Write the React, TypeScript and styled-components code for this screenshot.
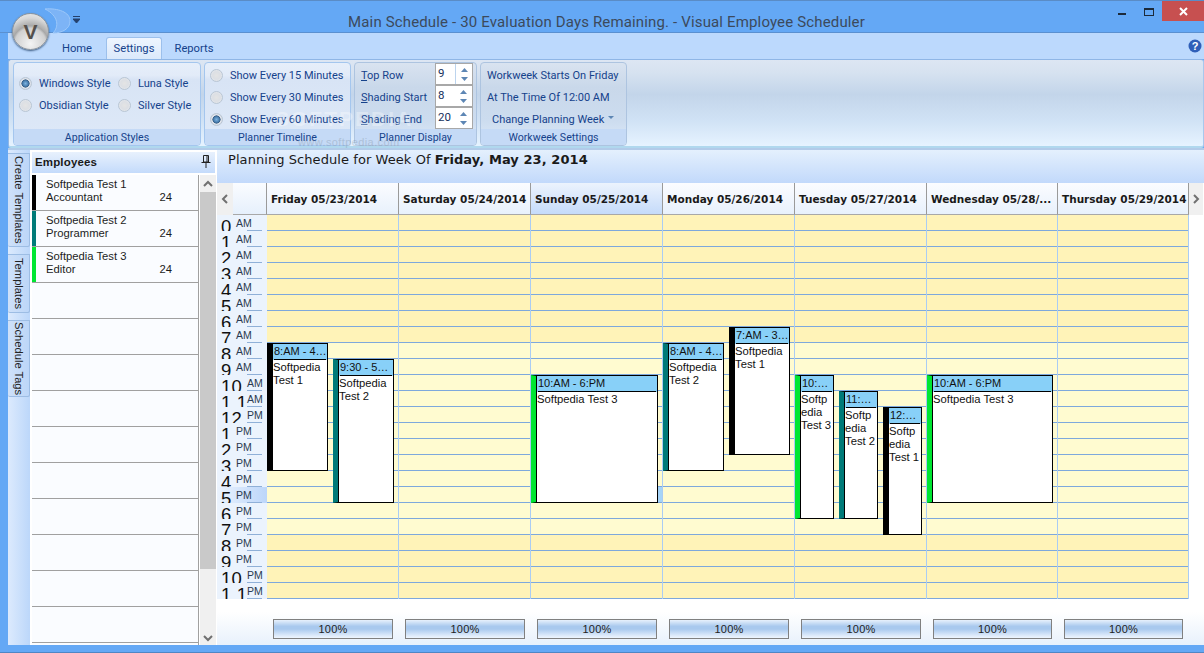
import React from "react";
import styled, { createGlobalStyle } from "styled-components";

const Global = createGlobalStyle`
  html, body { margin: 0; padding: 0; background: #64a8f5; }
  * { box-sizing: border-box; }
`;

const UI = `Roboto, "Liberation Sans", sans-serif`;
const SMALL = `"Liberation Sans", Arial, sans-serif`;
const VERD = `"DejaVu Sans", Verdana, sans-serif`;

const Window = styled.div`
  position: relative; width: 1204px; height: 653px; overflow: hidden;
  display: flex; flex-direction: column;
  background: #64a8f5; border-top: 1px solid #5a8cc6; border-bottom: 1px solid #4f86c4;
  font-family: ${UI}; color: #15428b;
`;
const TitleBar = styled.div`
  height: 32px; flex: none; display: flex; align-items: flex-start; justify-content: center;
  padding: 12px 0 0 9px; position: relative; border-bottom: 1px solid #5a90d0;
`;
const Title = styled.div`
  font-size: 15px; line-height: 18px; color: #3c4a5c; letter-spacing: 0.15px; white-space: nowrap;
`;
const Controls = styled.div`
  position: absolute; top: 0; right: 0; display: flex; align-items: flex-start;
`;
const MinBtn = styled.div`
  width: 8px; height: 2px; background: #1c2a3a; margin: 12px 18px 0 0;
`;
const MaxBtn = styled.div`
  width: 10px; height: 8px; border: 1px solid #1c2a3a; border-top-width: 2px; margin: 7px 8px 0 0;
`;
const CloseBtn = styled.div`
  width: 42px; height: 20px; background: #c75050; display: flex; align-items: center; justify-content: center;
`;
const Orb = styled.div`
  position: absolute; left: 12px; top: 12px; width: 37px; height: 37px; border-radius: 50%; z-index: 5;
  background: radial-gradient(circle at 50% 85%, #f4f4f4 0%, #d0d0d0 45%, #a8a8a8 52%, #d8d8d8 75%, #f2f2f2 100%);
  border: 1px solid #8c949c; box-shadow: 0 1px 2px #3a5a80;
  display: flex; align-items: center; justify-content: center;
  font: bold 21px ${SMALL}; color: #55504c;
`;
const QuickShape = styled.svg`
  position: absolute; left: 44px; top: 7px; z-index: 4;
`;
const QuickArrow = styled.svg`
  position: absolute; left: 73px; top: 15px; z-index: 4;
`;

const TabRow = styled.div`
  height: 26px; flex: none; margin-left: 8px; background: #bcd9fd; display: flex; align-items: flex-end;
  padding-left: 40px; position: relative; gap: 0;
`;
const Tab = styled.div<{ $active?: boolean; $w: number }>`
  height: 22px; width: ${p => p.$w}px; font-size: 11.2px; color: #15428b;
  display: flex; align-items: center; justify-content: center;
  ${p => p.$active ? `
    background: linear-gradient(#eef5fe, #dbe9fb);
    border: 1px solid #9cc0ec; border-bottom: none; border-radius: 3px 3px 0 0;
  ` : ""}
`;
const Help = styled.svg`
  position: absolute; right: 2px; top: 6px;
`;

const GroupPanel = styled.div`
  height: 89px; flex: none; margin-left: 8px; padding: 2px 0 0 4px; display: flex; gap: 3px;
  background: linear-gradient(#dde6f3 0%, #d6e2f0 15%, #c3d5ea 40%, #d0e2f5 70%, #e6f3ff 100%);
  border: 1px solid #8fb6e6; border-right-color: #a8c8ee; border-radius: 3px; border-bottom: 2px solid #b0d8ee;
`;
const Group = styled.div<{ $w: number; $light?: boolean }>`
  width: ${p => p.$w}px; height: 84px; flex: none; display: flex; flex-direction: column; overflow: hidden;
  border: 1px solid ${p => p.$light ? "#a4c6ee" : "#adc4e0"}; border-radius: 4px;
  background: ${p => p.$light
    ? "linear-gradient(#e6eefa 0%, #e2ebf8 15%, #d8e4f5 20%, #dee9f8 100%)"
    : "linear-gradient(#d9e3f0 0%, #c9d8ea 30%, #ccdcef 70%, #dde9f8 100%)"};
`;
const GroupBody = styled.div`
  flex: 1; min-height: 0; position: relative;
`;
const GroupLabel = styled.div`
  height: 16px; flex: none; background: #c5daf6; text-align: center; font-size: 10.6px; line-height: 17px; color: #15428b;
`;
const RadioGrid = styled.div`
  display: grid; grid-template-columns: 99px auto; grid-auto-rows: 22px; padding: 9px 0 0 5px;
`;
const RadioColumn = styled.div`
  display: flex; flex-direction: column; padding: 1px 0 0 5px;
`;
const RadioRow = styled.div`
  height: 22px; display: flex; align-items: center; gap: 7px; font-size: 11px; white-space: nowrap; color: #15428b;
`;
const Radio = styled.span<{ $on?: boolean }>`
  width: 13px; height: 13px; border-radius: 50%; flex: none; border: 1px solid #b9c6d4;
  background: ${p => p.$on
    ? "radial-gradient(circle closest-side, #7fb4e0 0%, #4a7fb0 50%, #34597f 70%, #e4e8ee 78%, #d8dde6 100%)"
    : "radial-gradient(circle, #e4e4e4 0%, #dcdfe4 50%, #eef0f4 100%)"};
`;
const DisplayGrid = styled.div`
  display: grid; grid-template-columns: 74px 38px; grid-auto-rows: 22px; padding: 0 0 0 6px; align-items: center;
`;
const FieldLabel = styled.div`
  font-size: 11px; color: #15428b; white-space: nowrap; padding-top: 2px;
  u { text-underline-offset: 1px; }
`;
const Spinner = styled.div`
  height: 22px; width: 38px; background: #fff; border: 1px solid #a8a8a8; position: relative; display: flex;
  font-size: 11.5px; color: #15305c; padding: 2px 0 0 2px;
`;
const SpinButtons = styled.div<{ $focus?: boolean }>`
  position: absolute; right: 0; top: 0; bottom: 0; width: 17px; display: flex; flex-direction: column;
  align-items: center; justify-content: center; gap: 5px;
  border-left: ${p => p.$focus ? "1px solid #bcd4ee" : "none"};
`;
const SpinArrow = styled.svg``;
const WorkColumn = styled.div`
  display: flex; flex-direction: column; padding: 1px 0 0 6px;
`;
const WorkLine = styled.div<{ $center?: boolean }>`
  height: 22px; display: flex; align-items: center; gap: 4px; font-size: 11px; white-space: nowrap; color: #15428b;
  padding-left: ${p => p.$center ? 5 : 0}px;
`;
const DropCaret = styled.svg`
  margin-top: -4px;
`;
const Watermark = styled.div`
  position: absolute; left: 275px; top: 106px; z-index: 6; color: #fff; opacity: 0.32;
  font: bold 21px ${SMALL}; letter-spacing: 2px; pointer-events: none;
`;
const WatermarkUrl = styled.div`
  position: absolute; left: 298px; top: 135px; z-index: 6; color: #8090a0; opacity: 0.35;
  font: 11px ${SMALL}; letter-spacing: 0.4px; pointer-events: none;
`;

const Body = styled.div`
  flex: 1; min-height: 0; margin: 2px 0 7px 8px; display: flex; background: #fff;
  box-shadow: 0 -2px 0 #b2cbe9;
`;
const SideStrip = styled.div`
  width: 23px; flex: none; display: flex; flex-direction: column; gap: 7px; padding-top: 3px;
  background: linear-gradient(90deg, #dceafd, #bcd7fa); border-right: 1px solid #fff;
`;
const SideTab = styled.div<{ $h: number }>`
  height: ${p => p.$h}px; width: 22px; writing-mode: vertical-rl; display: flex; align-items: center; justify-content: center;
  background: linear-gradient(90deg, #cfe1f9, #bcd6f8); border: 1px solid #9dbde4; border-left: none;
  font: 11.2px ${SMALL}; color: #222; white-space: nowrap; border-radius: 0 0 2px 2px;
`;
const EmployeePanel = styled.div`
  width: 185px; flex: none; display: flex; flex-direction: column; padding-left: 1px; background: #fff;
`;
const PanelHead = styled.div`
  height: 23px; flex: none; display: flex; align-items: center; justify-content: space-between; padding: 0 4px 2px 3px;
  background: linear-gradient(#e8f1fd, #c4dbfb); font: bold 11.5px ${SMALL}; letter-spacing: 0.15px; color: #1a1a1a;
  margin-right: 1px; border-top: 2px solid #fff;
`;
const PanelMain = styled.div`
  flex: 1; min-height: 0; display: flex; padding-top: 2px;
`;
const EmpList = styled.div`
  width: 167px; flex: none; background: #fafcff; border-right: 1px solid #a0a0a0; overflow: hidden;
`;
const EmpRow = styled.div`
  height: 36px; display: flex; border-bottom: 1px solid #a0a0a0;
`;
const EmpBar = styled.div<{ $c?: string }>`
  width: 4px; flex: none; background: ${p => p.$c ?? "transparent"};
`;
const EmpText = styled.div`
  flex: 1; padding: 3px 0 0 10px; font: 11.25px/13px ${SMALL}; color: #1c1c1c;
`;
const EmpLine = styled.div`
  display: flex; justify-content: space-between; padding-right: 26px; white-space: nowrap;
`;
const ScrollBar = styled.div`
  width: 16px; flex: none; margin-left: 1px; display: flex; flex-direction: column; align-items: stretch; background: #f0f0f0;
`;
const ScrollBtn = styled.div`
  height: 17px; flex: none; display: flex; align-items: center; justify-content: center;
`;
const ScrollThumb = styled.div`
  height: 377px; flex: none; background: #c9c9c9;
`;
const ScrollRest = styled.div`
  flex: 1; display: flex; align-items: flex-end; justify-content: center; padding-bottom: 2px;
`;

const Planner = styled.div`
  flex: 1; min-width: 0; margin-left: 1px; display: flex; flex-direction: column; background: #fff;
`;
const PlanHead = styled.div`
  height: 33px; flex: none; padding: 1px 0 0 11px; background: linear-gradient(#e4f0fd, #c2d9fb);
  font: 13px/17px ${VERD}; color: #1a1a1a; white-space: nowrap; letter-spacing: 0.07px;
  b { font-weight: 700; }
`;
const HeadRow = styled.div`
  height: 32px; flex: none; display: flex; background: #fff;
`;
const NavBtn = styled.div<{ $w: number }>`
  width: ${p => p.$w}px; flex: none; background: #f0f0f0; display: flex; align-items: center; justify-content: center;
`;
const HeadSpacer = styled.div`
  width: 34px; flex: none; background: linear-gradient(#fafcff, #e6f0fc); border-right: 1px solid #9a9a9a; border-bottom: 1px solid #a8a8a8;
`;
const DayHead = styled.div<{ $w: number; $hi?: boolean }>`
  width: ${p => p.$w}px; flex: none; padding: 0 0 0 4px; display: flex; align-items: center;
  border-right: 1px solid #9a9a9a; border-bottom: 1px solid #a8a8a8;
  font: bold 10.5px ${VERD}; color: #1a1a1a; white-space: nowrap; overflow: hidden;
  background: ${p => p.$hi ? "linear-gradient(#ecf3fd, #c5dbfa)" : "linear-gradient(#fbfcff, #e8f1fc)"};
`;
const GridRow = styled.div`
  height: 384px; flex: none; display: flex; background: #fff;
`;
const TimeCol = styled.div`
  width: 50px; flex: none; background: #ebf3fd; display: flex; flex-direction: column;
`;
const TimeCell = styled.div<{ $hi?: boolean }>`
  height: 16px; flex: none; position: relative; overflow: hidden; padding-left: 4px; display: flex; align-items: flex-start;
  background: ${p => p.$hi ? "linear-gradient(90deg, #ebf3fd, #bcd6fa)" : "transparent"};
`;
const Hour = styled.span`
  font: 18.5px/20px ${SMALL}; color: #101010; margin-top: 2px; letter-spacing: 0.2px; white-space: nowrap;
`;
const Meridiem = styled.span<{ $wide?: boolean }>`
  font: 10.5px/12px ${SMALL}; color: #2a3a50; position: absolute; left: ${p => p.$wide ? 30 : 19}px; top: 2px;
`;
const TickLine = styled.i`
  position: absolute; right: 5px; bottom: 0; width: 15px; height: 1px; background: #8fb0d8;
`;
const DayCol = styled.div<{ $w: number }>`
  width: ${p => p.$w}px; flex: none; position: relative; display: flex; flex-direction: column; border-right: 1px solid #aaccf4;
`;
const Cell = styled.div<{ $shade?: boolean }>`
  height: 16px; flex: none; border-bottom: 1px solid #7ea8dc;
  background: ${p => p.$shade ? "#fff3b8" : "#fffbd0"};
  position: relative;
`;
const SelMark = styled.i`
  position: absolute; right: 0; top: 0; bottom: 0; width: 5px; background: #a6d4f8;
`;
const EventBox = styled.div<{ $l: number; $t: number; $w: number; $h: number; $c: string }>`
  position: absolute; left: ${p => p.$l}px; top: ${p => p.$t}px; width: ${p => p.$w}px; height: ${p => p.$h}px;
  display: flex; flex-direction: column; background: #fff; border: 1px solid #000; border-left: 5px solid ${p => p.$c};
  font: 11.25px/13px ${SMALL}; color: #111; z-index: 2; box-shadow: inset 1px 0 0 #000;
`;
const EventHead = styled.div`
  height: 16px; flex: none; margin-left: 1px; padding: 1px 0 0 1px; background: #88d0f8; position: relative;
  font-size: 11px; white-space: nowrap; overflow: hidden; text-overflow: ellipsis;
  &::after { content: ""; position: absolute; left: 1px; right: 1px; bottom: 0; height: 1px; background: #000; }
`;
const EventText = styled.div`
  padding: 1px 0 0 0; margin-left: 1px; overflow-wrap: anywhere; word-break: break-word;
`;
const Foot = styled.div`
  flex: 1; min-height: 0; display: flex; padding: 20px 0 0 56px; gap: 12px;
  background: linear-gradient(#fff 0%, #fff 28%, #e8f1fc 100%);
`;
const ZoomBtn = styled.div<{ $w: number }>`
  width: ${p => p.$w}px; height: 20px; flex: none; border: 1px solid #808080;
  background: linear-gradient(#e8f1fc 0%, #a9c9ee 35%, #a9c9ee 50%, #dce9fa 85%, #eef5fe 100%);
  display: flex; align-items: center; justify-content: center; font: 11px ${SMALL}; color: #222; letter-spacing: 0.2px;
`;

const days = [
  { label: "Friday 05/23/2014", w: 132 },
  { label: "Saturday 05/24/2014", w: 132 },
  { label: "Sunday 05/25/2014", w: 132, hi: true },
  { label: "Monday 05/26/2014", w: 132 },
  { label: "Tuesday 05/27/2014", w: 132 },
  { label: "Wednesday 05/28/...", w: 131 },
  { label: "Thursday 05/29/2014", w: 131 },
];
const BLACK = "#000";
const TEAL = "#007a78";
const GREEN = "#00e632";
const events = [
  { d: 0, l: 0, t: 8, r: 8, w: 61, time: "8:AM - 4:PM", who: "Softpedia Test 1", c: BLACK },
  { d: 0, l: 66, t: 9, r: 9, w: 61, time: "9:30 - 5PM", who: "Softpedia Test 2", c: TEAL },
  { d: 2, l: 0, t: 10, r: 8, w: 127, time: "10:AM - 6:PM", who: "Softpedia Test 3", c: GREEN },
  { d: 3, l: 0, t: 8, r: 8, w: 61, time: "8:AM - 4:PM", who: "Softpedia Test 2", c: TEAL },
  { d: 3, l: 66, t: 7, r: 8, w: 61, time: "7:AM - 3:PM", who: "Softpedia Test 1", c: BLACK },
  { d: 4, l: 0, t: 10, r: 9, w: 39, time: "10:AM - 7:PM", who: "Softpedia Test 3", c: GREEN },
  { d: 4, l: 44, t: 11, r: 8, w: 39, time: "11:AM - 7:PM", who: "Softpedia Test 2", c: TEAL },
  { d: 4, l: 88, t: 12, r: 8, w: 39, time: "12:PM - 8:PM", who: "Softpedia Test 1", c: BLACK },
  { d: 5, l: 0, t: 10, r: 8, w: 126, time: "10:AM - 6:PM", who: "Softpedia Test 3", c: GREEN },
];
const hours = Array.from({ length: 24 }, (_, i) => ({
  n: i === 0 || i === 12 ? (i === 0 ? "0" : "12") : i < 12 ? `${i}` : `${i - 12}`,
  m: i < 12 ? "AM" : "PM",
  i,
}));
const employees = [
  { name: "Softpedia Test 1", role: "Accountant", c: BLACK },
  { name: "Softpedia Test 2", role: "Programmer", c: TEAL },
  { name: "Softpedia Test 3", role: "Editor", c: GREEN },
];
const SpinIcons = ({ focus }: { focus?: boolean }) => (
  <SpinButtons $focus={focus}>
    <SpinArrow width="7" height="4" viewBox="0 0 7 4"><path d="M0 4 L3.5 0 L7 4Z" fill="#5d86b4" /></SpinArrow>
    <SpinArrow width="7" height="4" viewBox="0 0 7 4"><path d="M0 0 L3.5 4 L7 0Z" fill="#5d86b4" /></SpinArrow>
  </SpinButtons>
);
const Chevron = ({ d }: { d: string }) => (
  <svg width="10" height="10" viewBox="0 0 10 10"><path d={d} fill="none" stroke="#707070" strokeWidth="2" /></svg>
);

export default function App() {
  return (
    <>
      <Global />
      <Window>
        <TitleBar>
          <Title>Main Schedule - 30 Evaluation Days Remaining. - Visual Employee Scheduler</Title>
          <Controls>
            <MinBtn />
            <MaxBtn />
            <CloseBtn>
              <svg width="9" height="9" viewBox="0 0 9 9"><path d="M1 1 L8 8 M8 1 L1 8" stroke="#fff" strokeWidth="2" /></svg>
            </CloseBtn>
          </Controls>
        </TitleBar>
        <Orb>V</Orb>
        <QuickShape width="27" height="26" viewBox="0 0 27 26">
          <path d="M1 1 C14 0 26 4 26 13 C26 21 18 25 9 25 C15 19 15 8 1 1Z" fill="#7db4f6" stroke="#9cc8fa" />
        </QuickShape>
        <QuickArrow width="7" height="7" viewBox="0 0 7 7">
          <path d="M0 0.5 H7 M0 3 H7 L3.5 7Z" stroke="#24406c" strokeWidth="1" fill="#24406c" />
        </QuickArrow>
        <TabRow>
          <Tab $w={58}>Home</Tab>
          <Tab $w={56} $active>Settings</Tab>
          <Tab $w={64}>Reports</Tab>
          <Help width="14" height="14" viewBox="0 0 14 14">
            <circle cx="7" cy="7" r="6.5" fill="#2f5fb8" />
            <text x="7" y="11" textAnchor="middle" fontFamily="Liberation Sans" fontWeight="bold" fontSize="11" fill="#fff">?</text>
          </Help>
        </TabRow>
        <GroupPanel>
          <Group $w={188} $light>
            <GroupBody>
              <RadioGrid>
                <RadioRow><Radio $on />Windows Style</RadioRow>
                <RadioRow><Radio />Luna Style</RadioRow>
                <RadioRow><Radio />Obsidian Style</RadioRow>
                <RadioRow><Radio />Silver Style</RadioRow>
              </RadioGrid>
            </GroupBody>
            <GroupLabel>Application Styles</GroupLabel>
          </Group>
          <Group $w={147} $light>
            <GroupBody>
              <RadioColumn>
                <RadioRow><Radio />Show Every 15 Minutes</RadioRow>
                <RadioRow><Radio />Show Every 30 Minutes</RadioRow>
                <RadioRow><Radio $on />Show Every 60 Minutes</RadioRow>
              </RadioColumn>
            </GroupBody>
            <GroupLabel>Planner Timeline</GroupLabel>
          </Group>
          <Group $w={123}>
            <GroupBody>
              <DisplayGrid>
                <FieldLabel><u>T</u>op Row</FieldLabel>
                <Spinner>9<SpinIcons focus /></Spinner>
                <FieldLabel><u>S</u>hading Start</FieldLabel>
                <Spinner>8<SpinIcons /></Spinner>
                <FieldLabel><u>S</u>hading End</FieldLabel>
                <Spinner>20<SpinIcons /></Spinner>
              </DisplayGrid>
            </GroupBody>
            <GroupLabel>Planner Display</GroupLabel>
          </Group>
          <Group $w={147}>
            <GroupBody>
              <WorkColumn>
                <WorkLine>Workweek Starts On Friday</WorkLine>
                <WorkLine>At The Time Of 12:00 AM</WorkLine>
                <WorkLine $center>
                  Change Planning Week
                  <DropCaret width="6" height="3" viewBox="0 0 6 3"><path d="M0 0H6L3 3Z" fill="#5d86b4" /></DropCaret>
                </WorkLine>
              </WorkColumn>
            </GroupBody>
            <GroupLabel>Workweek Settings</GroupLabel>
          </Group>
        </GroupPanel>
        <Watermark>SOFTPEDIA</Watermark>
        <WatermarkUrl>www.softpedia.com</WatermarkUrl>
        <Body>
          <SideStrip>
            <SideTab $h={94}>Create Templates</SideTab>
            <SideTab $h={59}>Templates</SideTab>
            <SideTab $h={77}>Schedule Tags</SideTab>
          </SideStrip>
          <EmployeePanel>
            <PanelHead>
              Employees
              <svg width="10" height="13" viewBox="0 0 10 13">
                <path d="M2.5 0.5H7.5V7H2.5Z M0.5 7.5H9.5 M5 8V13 M6 1V7" fill="none" stroke="#222" />
              </svg>
            </PanelHead>
            <PanelMain>
              <EmpList>
                {employees.map(e => (
                  <EmpRow key={e.name}>
                    <EmpBar $c={e.c} />
                    <EmpText>
                      <EmpLine>{e.name}</EmpLine>
                      <EmpLine>{e.role}<span>24</span></EmpLine>
                    </EmpText>
                  </EmpRow>
                ))}
                {Array.from({ length: 10 }, (_, i) => <EmpRow key={i} />)}
              </EmpList>
              <ScrollBar>
                <ScrollBtn><Chevron d="M1 7 L5 3 L9 7" /></ScrollBtn>
                <ScrollThumb />
                <ScrollRest><Chevron d="M1 3 L5 7 L9 3" /></ScrollRest>
              </ScrollBar>
            </PanelMain>
          </EmployeePanel>
          <Planner>
            <PlanHead>Planning Schedule for Week Of <b>Friday, May 23, 2014</b></PlanHead>
            <HeadRow>
              <NavBtn $w={16}><Chevron d="M7 1 L3 5 L7 9" /></NavBtn>
              <HeadSpacer />
              {days.map(d => <DayHead key={d.label} $w={d.w} $hi={d.hi}>{d.label}</DayHead>)}
              <NavBtn $w={14}><Chevron d="M3 1 L7 5 L3 9" /></NavBtn>
            </HeadRow>
            <GridRow>
              <TimeCol>
                {hours.map(h => (
                  <TimeCell key={h.i} $hi={h.i === 17}>
                    <Hour>{h.n === "11" ? "1 1" : h.n}</Hour>
                    <Meridiem $wide={h.n.length > 1}>{h.m}</Meridiem>
                    <TickLine />
                  </TimeCell>
                ))}
              </TimeCol>
              {days.map((d, di) => (
                <DayCol key={d.label} $w={d.w}>
                  {hours.map(h => (
                    <Cell key={h.i} $shade={h.i < 8 || h.i >= 20}>
                      {di === 2 && h.i === 17 && <SelMark />}
                    </Cell>
                  ))}
                  {events.filter(e => e.d === di).map(e => (
                    <EventBox key={e.time + e.who} $l={e.l} $t={e.t * 16} $w={e.w} $h={e.r * 16} $c={e.c}>
                      <EventHead>{e.time}</EventHead>
                      <EventText>{e.who}</EventText>
                    </EventBox>
                  ))}
                </DayCol>
              ))}
            </GridRow>
            <Foot>
              {days.map(d => <ZoomBtn key={d.label} $w={d.w - 12}>100%</ZoomBtn>)}
            </Foot>
          </Planner>
        </Body>
      </Window>
    </>
  );
}
